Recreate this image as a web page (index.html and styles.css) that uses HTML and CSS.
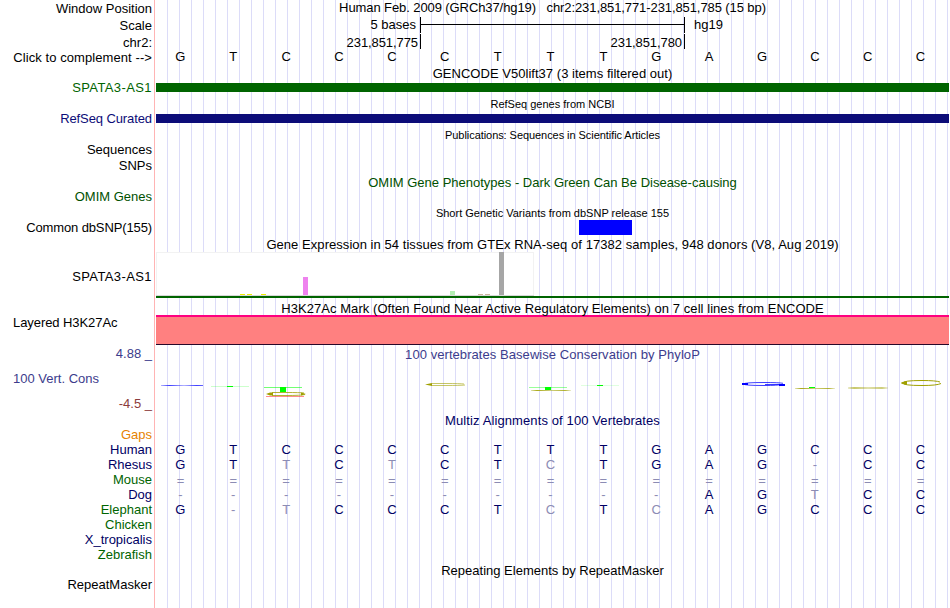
FILE: index.html
```
<!DOCTYPE html>
<html lang="en">
<head>
    <meta charset="UTF-8">
    <meta name="viewport" content="width=device-width, initial-scale=1.0">
    <title>Human chr2:231,851,771-231,851,785 - Genome Browser</title>
    <link rel="stylesheet" href="styles.css">
</head>
<body>
    <div class="browser">
        <!-- ruler -->
        <div class="track ruler">
            <div class="labels">
                <div class="label">Window Position</div>
                <div class="label scale-label">Scale</div>
                <div class="label chrom-label">chr2:</div>
                <div class="label t-click">Click to complement --&gt;</div>
            </div>
            <div class="data">
                <div class="title t-position">Human Feb. 2009 (GRCh37/hg19) &nbsp; chr2:231,851,771-231,851,785 (15 bp)</div>
                <div class="scale">
                    <span class="scale-text">5 bases</span>
                    <span class="scale-bar"></span>
                    <span class="scale-db">hg19</span>
                </div>
                <div class="ticks">
                    <span class="tick">231,851,775</span>
                    <span class="tick">231,851,780</span>
                </div>
                <div class="bases"><i>G</i><i>T</i><i>C</i><i>C</i><i>C</i><i>C</i><i>T</i><i>T</i><i>T</i><i>G</i><i>A</i><i>G</i><i>C</i><i>C</i><i>C</i></div>
            </div>
        </div>

        <div class="track gencode">
            <div class="labels"><div class="label green t-gene">SPATA3-AS1</div></div>
            <div class="data">
                <div class="title t-gencode">GENCODE V50lift37 (3 items filtered out)</div>
                <div class="gene gene-green"></div>
            </div>
        </div>

        <div class="track refseq">
            <div class="labels"><div class="label blue t-refseq">RefSeq Curated</div></div>
            <div class="data">
                <div class="title small">RefSeq genes from NCBI</div>
                <div class="gene gene-blue"></div>
            </div>
        </div>

        <div class="track pubs">
            <div class="labels">
                <div class="label">Sequences</div>
                <div class="label">SNPs</div>
            </div>
            <div class="data">
                <div class="title small t-pubs">Publications: Sequences in Scientific Articles</div>
            </div>
        </div>

        <div class="track omim">
            <div class="labels"><div class="label dark-green">OMIM Genes</div></div>
            <div class="data">
                <div class="title dark-green t-omim">OMIM Gene Phenotypes - Dark Green Can Be Disease-causing</div>
            </div>
        </div>

        <div class="track dbsnp">
            <div class="labels"><div class="label t-common">Common dbSNP(155)</div></div>
            <div class="data">
                <div class="title small t-dbsnp">Short Genetic Variants from dbSNP release 155</div>
                <div class="snp"></div>
            </div>
        </div>

        <div class="track gtex">
            <div class="labels"><div class="label t-gene">SPATA3-AS1</div></div>
            <div class="data">
                <div class="title t-gtex">Gene Expression in 54 tissues from GTEx RNA-seq of 17382 samples, 948 donors (V8, Aug 2019)</div>
                <svg class="gtex-chart" width="378" height="44" viewBox="0 0 378 44" shape-rendering="crispEdges">
                    <rect width="378" height="44" fill="#f2f2f2"/>
                    <rect x="1" y="1" width="376" height="42" fill="#fff"/>
                    <rect y="43" width="378" height="1" fill="#d8d8d8"/>
                    <rect x="84" y="42" width="5" height="1" fill="#eeee00"/>
                    <rect x="91" y="42" width="5" height="1" fill="#eeee00"/>
                    <rect x="105" y="42" width="5" height="1" fill="#eeee00"/>
                    <rect x="147" y="25" width="5" height="18" fill="#ee82ee"/>
                    <rect x="294" y="39" width="5" height="4" fill="#b4eeb4"/>
                    <rect x="322" y="42" width="5" height="1" fill="#cdb79e"/>
                    <rect x="329" y="42" width="5" height="1" fill="#cdb79e"/>
                    <rect x="343" y="0" width="5" height="43" fill="#a6a6a6"/>
                </svg>
                <div class="gene-line"></div>
            </div>
        </div>

        <div class="track h3k27ac">
            <div class="labels"><div class="label left t-layered">Layered H3K27Ac</div></div>
            <div class="data">
                <div class="title t-h3k">H3K27Ac Mark (Often Found Near Active Regulatory Elements) on 7 cell lines from ENCODE</div>
                <div class="signal"></div>
            </div>
        </div>

        <div class="track phylop">
            <div class="labels">
                <div class="label violet">4.88 _</div>
                <div class="label violet left">100 Vert. Cons</div>
                <div class="label maroon">-4.5 _</div>
            </div>
            <div class="data">
                <div class="title violet t-phylop">100 vertebrates Basewise Conservation by PhyloP</div>
                <!-- conservation logo, letters squashed to their scores -->
                <svg class="logo" width="793" height="24" viewBox="156 376 793 24">
                    <defs>
                        <linearGradient id="fade">
                            <stop offset="0" stop-color="#00f" stop-opacity=".3"/>
                            <stop offset=".2" stop-color="#00f" stop-opacity=".75"/>
                            <stop offset=".55" stop-color="#00f" stop-opacity=".3"/>
                            <stop offset=".85" stop-color="#00f" stop-opacity=".75"/>
                            <stop offset="1" stop-color="#00f" stop-opacity=".6"/>
                        </linearGradient>
                        <linearGradient id="olive">
                            <stop offset="0" stop-color="#a0a000" stop-opacity=".3"/>
                            <stop offset=".15" stop-color="#a0a000" stop-opacity=".9"/>
                            <stop offset=".5" stop-color="#a0a000" stop-opacity=".5"/>
                            <stop offset=".85" stop-color="#a0a000" stop-opacity=".8"/>
                            <stop offset="1" stop-color="#a0a000" stop-opacity=".2"/>
                        </linearGradient>
                    </defs>
                    <rect x="161" y="385" width="42" height="1" fill="url(#fade)"/>

                    <rect x="211" y="386" width="38" height="1" fill="#0f0" opacity=".2"/>
                    <rect x="227" y="386" width="6" height="1" fill="#0f0"/>

                    <rect x="264" y="387" width="38" height="1" fill="#0f0" opacity=".55"/>
                    <rect x="280" y="387" width="6" height="5" fill="#0f0"/>
                    <rect x="266" y="396" width="38" height="1" fill="#f00" opacity=".45"/>
                    <path d="M304 393 Q300 392.5 286 392.5 H272 M272 395.5 H286 Q301 395.5 305 394.5" fill="none" stroke="#a0a000" stroke-opacity=".8"/>
                    <path d="M266 394 L270 392.5 H273 V395.5 H270 Z M306 394 L301 392.5 V395.5 Z" fill="#a0a000"/>

                    <path d="M464 384 Q460 383.5 446 383.5 H432 M432 385.5 H446 Q460 385.5 465 385" fill="none" stroke="#a0a000" stroke-opacity=".6"/>
                    <path d="M425 384.5 L432 383 V386 Z" fill="#a0a000"/>

                    <rect x="529" y="387" width="38" height="1" fill="#0f0" opacity=".4"/>
                    <rect x="545" y="387" width="6" height="3" fill="#0f0"/>
                    <rect x="531" y="390" width="40" height="1" fill="url(#olive)"/>

                    <rect x="581" y="385" width="38" height="1" fill="#0f0" opacity=".12"/>
                    <rect x="597" y="385" width="6" height="1" fill="#0f0"/>

                    <path d="M783 383.3 Q779 382.5 764 382.5 Q744 382.5 744 384 Q744 385.5 764 385.5 Q778 385.5 781 384.5 M765 384.5 H785" fill="none" stroke="#00f" stroke-opacity=".75"/>
                    <path d="M742 383 H748 V385 H742 Z M779 384 H785 V386 H779 Z" fill="#00f"/>

                    <rect x="795" y="388" width="40" height="1" fill="url(#olive)"/>
                    <rect x="809" y="387" width="6" height="1" fill="#0f0"/>

                    <rect x="848" y="387" width="40" height="2" fill="url(#olive)" opacity=".65"/>

                    <path d="M940 382 Q936 380.5 922 380.5 Q903 380.5 903 383 Q903 385.5 922 385.5 Q937 385.5 941 383.5" fill="none" stroke="#a0a000"/>
                    <path d="M901 383 Q901 382 907 381 V385 Q901 384 901 383 Z" fill="#a0a000"/>
                </svg>
            </div>
        </div>

        <div class="track multiz">
            <div class="labels">
                <div class="label orange">Gaps</div>
                <div class="label navy">Human</div>
                <div class="label navy">Rhesus</div>
                <div class="label green">Mouse</div>
                <div class="label navy">Dog</div>
                <div class="label green">Elephant</div>
                <div class="label green">Chicken</div>
                <div class="label navy">X_tropicalis</div>
                <div class="label green">Zebrafish</div>
            </div>
            <div class="data navy">
                <div class="title t-multiz">Multiz Alignments of 100 Vertebrates</div>
                <div class="bases"><i>G</i><i>T</i><i>C</i><i>C</i><i>C</i><i>C</i><i>T</i><i>T</i><i>T</i><i>G</i><i>A</i><i>G</i><i>C</i><i>C</i><i>C</i></div>
                <div class="bases"><i>G</i><i>T</i><i class="diff">T</i><i>C</i><i class="diff">T</i><i>C</i><i>T</i><i class="diff">C</i><i>T</i><i>G</i><i>A</i><i>G</i><i class="diff">-</i><i>C</i><i>C</i></div>
                <div class="bases diff equals"><i>=</i><i>=</i><i>=</i><i>=</i><i>=</i><i>=</i><i>=</i><i>=</i><i>=</i><i>=</i><i>=</i><i>=</i><i>=</i><i>=</i><i>=</i></div>
                <div class="bases"><i class="diff">-</i><i class="diff">-</i><i class="diff">-</i><i class="diff">-</i><i class="diff">-</i><i class="diff">-</i><i class="diff">-</i><i class="diff">-</i><i class="diff">-</i><i class="diff">-</i><i>A</i><i>G</i><i class="diff">T</i><i>C</i><i>C</i></div>
                <div class="bases"><i>G</i><i class="diff">-</i><i class="diff">T</i><i>C</i><i>C</i><i>C</i><i>T</i><i class="diff">C</i><i>T</i><i class="diff">C</i><i>A</i><i>G</i><i>C</i><i>C</i><i>C</i></div>
            </div>
        </div>

        <div class="track repeats">
            <div class="labels"><div class="label">RepeatMasker</div></div>
            <div class="data">
                <div class="title t-repeats">Repeating Elements by RepeatMasker</div>
            </div>
        </div>
    </div>
</body>
</html>
```
FILE: styles.css
```
body {
    margin: 0;
    background: #fff;
    color: #000;
    font-family: "Liberation Sans", Arial, Helvetica, sans-serif;
    font-size: 13px;
    line-height: 15px;
}
.browser {
    width: 949px;
    height: 608px;
    overflow: hidden;
    /* pink divider, then a guide line every 12px */
    background:
        linear-gradient(#ffb4b4, #ffb4b4) 154px 0 / 1px 100% no-repeat,
        repeating-linear-gradient(90deg, #dcdcf8 0 1px, transparent 1px 12px) 167px 0 / 782px 100% no-repeat;
}
.track {
    display: grid;
    grid-template-columns: 152px 793px;
    column-gap: 4px;
    white-space: nowrap;
}
.label {
    height: 15px;
    text-align: right;
}
.label.left {
    text-align: left;
    padding-left: 13px;
}
.title {
    height: 15px;
    text-align: center;
}
.small {
    font-size: 11px;
}

/* text tracking */
.t-position { letter-spacing: -0.09px; }
.t-click { letter-spacing: 0.08px; }
.t-gene { letter-spacing: 0.4px; }
.t-gencode { letter-spacing: 0.03px; }
.t-refseq { letter-spacing: -0.1px; }
.t-pubs { letter-spacing: -0.06px; }
.t-common { letter-spacing: -0.12px; }
.t-gtex { letter-spacing: 0.055px; }
.t-h3k { letter-spacing: 0.058px; }
.t-layered { letter-spacing: -0.07px; }
.t-phylop { letter-spacing: 0.06px; }
.t-multiz { letter-spacing: 0.11px; }

/* colours */
.green { color: #006400; }
.dark-green { color: #005000; }
.blue { color: #0c0c78; }
.navy { color: #000064; }
.violet { color: #3c3c8c; }
.maroon { color: #8c3c3c; }
.orange { color: #e68200; }
.diff { color: #8c8cb4; }

/* ruler */
.ruler { height: 66px; }
.ruler .labels { padding-top: 1px; }
.scale-label { margin: 2px 0; }
.scale {
    display: flex;
    height: 16px;
    margin-top: 2px;
}
.scale-text {
    width: 260px;
    margin-right: 4px;
    text-align: right;
}
.scale-bar {
    width: 263px;
    border: solid #000;
    border-width: 0 1px;
    background: linear-gradient(#000, #000) 0 7px / 100% 1px no-repeat;
}
.scale-db { margin-left: 9px; }
.ticks {
    display: flex;
    height: 15px;
    margin-top: 1px;
}
.tick {
    box-sizing: border-box;
    width: 264px;
    padding: 1px 2px 0 0;
    border-right: 1px solid #000;
    text-align: right;
    letter-spacing: -0.08px;
}
.tick:first-child { width: 265px; }
.bases {
    display: grid;
    grid-template-columns: repeat(15, 1fr);
    width: 793px;
    height: 15px;
    margin-left: -2px;
    text-align: center;
}
.bases i { font-style: normal; }
.equals { padding-top: 1px; height: 14px; }

/* gene tracks */
.gene { height: 9px; }
.gene-green { background: #006400; }
.gene-blue { background: #0c0c78; }
.gencode { height: 30px; }
.gencode .labels { padding-top: 14px; }
.gencode .gene { margin-top: 2px; }
.refseq { height: 30px; }
.refseq .labels { padding-top: 15px; }
.refseq .title { padding-top: 1px; }
.refseq .gene { margin-top: 2px; }

.pubs { height: 49px; }
.pubs .labels { padding-top: 16px; }
.pubs .label { margin-bottom: 1px; }
.pubs .title { padding-top: 2px; }

.omim { height: 29px; }
.omim .labels { padding-top: 14px; }

.dbsnp { height: 33px; }
.dbsnp .labels { padding-top: 16px; }
.dbsnp .title { padding-top: 2px; height: 14px; }
.snp {
    width: 53px;
    height: 15px;
    margin-left: 423px;
    background: #00f;
}

.gtex { height: 64px; }
.gtex .labels { padding-top: 32px; }
.gtex-chart { display: block; }
.gene-line {
    height: 2px;
    background: #006400;
}

.h3k27ac { height: 45px; }
.h3k27ac .labels { padding-top: 14px; }
.h3k27ac .title { height: 14px; }
.signal {
    height: 27px;
    background: #ff8080;
    border-top: 2px solid #ff0080;
    border-bottom: 1px solid #280828;
}

.phylop { height: 67px; }
.phylop .label { margin-bottom: 10px; }
.phylop .title { padding-top: 1px; }
.logo {
    display: block;
    margin-top: 14px;
}

.multiz { height: 150px; }
.multiz .labels { padding-top: 14px; }
.multiz .title { margin-bottom: 14px; }

.repeats .labels { padding-top: 14px; }
```
